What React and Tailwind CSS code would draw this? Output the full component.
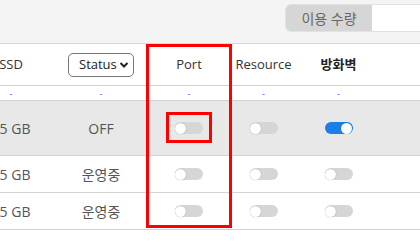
import React from "react";

function Toggle({ on }) {
  return (
    <div
      className={
        "relative w-[28px] h-[12px] rounded-full " +
        (on ? "bg-[#1a7fe6]" : "bg-[#d6d6d6]")
      }
    >
      <div
        className={
          "absolute top-[0.5px] w-[11px] h-[11px] rounded-full bg-white shadow-[0_0_1px_rgba(0,0,0,0.4)] " +
          (on ? "right-[1px]" : "left-[0px]")
        }
      />
    </div>
  );
}

const cols = "grid grid-cols-[90px_90px_86px_63px_87px_1fr] items-center";

function Row({ size, status, bg, h, toggles }) {
  return (
    <div className={cols + " border-b border-[#d4d4d4] " + bg + " " + h}>
      <div className="text-center text-[14px] text-[#555]">{size}</div>
      <div className="text-center text-[14px] text-[#555]">{status}</div>
      <div className="flex justify-center pl-[0px]"><Toggle on={toggles[0]} /></div>
      <div className="flex justify-center"><Toggle on={toggles[1]} /></div>
      <div className="flex justify-center"><Toggle on={toggles[2]} /></div>
      <div />
    </div>
  );
}

export default function App() {
  return (
    <div
      className="relative w-[420px] h-[242px] overflow-hidden bg-white"
      style={{ fontFamily: '"Open Sans", "Noto Sans CJK KR", sans-serif' }}
    >
      <div className="h-[43px] bg-[#f4f4f4] flex justify-end pt-[4px]">
        <div className="flex h-[28px] rounded-l-[6px] overflow-hidden border border-r-0 border-[#e2e2e2]">
          <div className="w-[86px] bg-[#d6d6d6] flex items-center justify-center text-[14px] text-[#666]">
            이용 수량
          </div>
          <div className="w-[48px] bg-white" />
        </div>
      </div>
      <div className="ml-[-34px] w-[454px] border-t border-[#d8d8d8]">
        <div className={cols + " h-[42px] border-b border-[#d0d0d0] text-[13px] text-[#333]"}>
          <div className="text-center">SSD</div>
          <div className="flex justify-center">
            <div className="w-[66px] h-[24px] rounded-[5px] border border-[#777] flex items-center justify-between pl-[10px] pr-[4px] text-[13px] text-[#222] bg-white">
              <span>Status</span>
              <svg width="10" height="8" viewBox="0 0 10 8">
                <path d="M1.5 2 L5 5.5 L8.5 2" fill="none" stroke="#222" strokeWidth="2" />
              </svg>
            </div>
          </div>
          <div className="text-center">Port</div>
          <div className="text-center">Resource</div>
          <div className="text-center font-bold text-[#222]">방화벽</div>
          <div />
        </div>
        <div className={cols + " h-[15px] border-b border-[#d0d0d0] text-[9px] text-[#4a4aff] leading-none"}>
          <div className="text-center">-</div>
          <div className="text-center">-</div>
          <div className="text-center">-</div>
          <div className="text-center">-</div>
          <div className="text-center">-</div>
          <div />
        </div>
        <Row size="25 GB" status="OFF" bg="bg-[#e8e8e8]" h="h-[55px]" toggles={[false, false, true]} />
        <Row size="25 GB" status="운영중" bg="bg-white" h="h-[37px]" toggles={[false, false, false]} />
        <Row size="25 GB" status="운영중" bg="bg-white" h="h-[37px]" toggles={[false, false, false]} />
        <Row size="25 GB" status="운영중" bg="bg-white" h="h-[37px]" toggles={[false, false, false]} />
      </div>
      <div className="absolute left-[146px] top-[44px] w-[86px] h-[184px] border-[3px] border-[#ff0000]" />
      <div className="absolute left-[166px] top-[112px] w-[46px] h-[31px] border-[3px] border-[#ff0000]" />
    </div>
  );
}
